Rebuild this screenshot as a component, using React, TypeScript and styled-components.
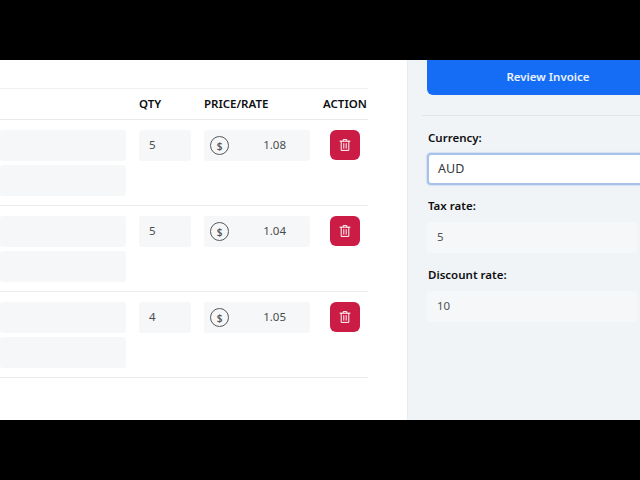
import React from "react";
import styled, { createGlobalStyle } from "styled-components";

const Global = createGlobalStyle`
  html, body { margin: 0; padding: 0; background: #000; }
  body { font-family: "Noto Sans", "Open Sans", "Liberation Sans", sans-serif; }
`;

const Screen = styled.div`
  width: 640px;
  height: 480px;
  overflow: hidden;
  background: #000;
  padding: 60px 0;
  box-sizing: border-box;
`;
const Body = styled.div`
  height: 360px;
  display: flex;
  overflow: hidden;
`;
const Main = styled.main`
  width: 407px;
  flex: none;
  background: #fff;
  padding-top: 28px;
  box-sizing: border-box;
`;
const Table = styled.div`
  width: 368px;
  border-top: 1px solid #eef0f2;
`;
const Columns = styled.div`
  display: grid;
  grid-template-columns: 126px 52px 106px 45px;
  column-gap: 13px;
  box-sizing: border-box;
  width: 368px;
`;
const Head = styled(Columns)`
  height: 31px;
  align-items: center;
  padding-bottom: 1px;
  border-bottom: 1px solid #e8eaed;
`;
const HeadCell = styled.div`
  font-size: 11.5px;
  font-weight: 600;
  color: #0d0f12;
  white-space: nowrap;
`;
const Row = styled(Columns)`
  height: 86px;
  padding-top: 10px;
  border-bottom: 1px solid #e9ebee;
  align-items: start;
`;
const NameStack = styled.div`
  display: flex;
  flex-direction: column;
  gap: 4px;
`;
const Field = styled.div`
  height: 31px;
  background: #f5f7f8;
  border-radius: 3px;
`;
const Qty = styled(Field)`
  display: flex;
  align-items: center;
  padding: 0 0 2px 10px;
  box-sizing: border-box;
  font-size: 11.5px;
  color: #4a4d50;
`;
const Price = styled(Field)`
  display: flex;
  align-items: center;
  justify-content: space-between;
  padding: 0 24px 0 6px;
  font-size: 11.5px;
  color: #4a4d50;
`;
const PriceValue = styled.span`
  margin-bottom: 2px;
`;
const Dollar = styled.span`
  width: 17px;
  height: 17px;
  border: 1.2px solid #56595c;
  border-radius: 50%;
  display: flex;
  align-items: center;
  justify-content: center;
  font-size: 10px;
  font-weight: 600;
  color: #56595c;
`;
const DeleteButton = styled.button`
  width: 30px;
  height: 30px;
  margin-left: 7px;
  padding: 0;
  border: 0;
  border-radius: 6px;
  background: #cb1c45;
  color: #fff;
  display: flex;
  align-items: center;
  justify-content: center;
`;
const Side = styled.aside`
  flex: 1;
  background: #f1f4f6;
  border-left: 1px solid #e9ebee;
  padding-left: 19px;
  min-width: 0;
`;
const Review = styled.button`
  width: 242px;
  height: 35px;
  border: 0;
  border-radius: 0 0 6px 6px;
  background: #166df5;
  color: #eaf2ff;
  font-family: inherit;
  font-size: 11.5px;
  font-weight: 600;
  display: block;
  padding: 0 0 3px 0;
  text-align: center;
`;
const Rule = styled.hr`
  border: 0;
  border-top: 1px solid #e1e4e8;
  margin: 20px 0 0 -5px;
`;
const Label = styled.label<{ $gap: number }>`
  display: block;
  font-size: 11.5px;
  font-weight: 600;
  color: #0d0f12;
  line-height: 16px;
  padding-left: 1px;
  margin-top: ${(p) => p.$gap}px;
`;
const Select = styled.div`
  margin-top: 7px;
  width: 240px;
  height: 32px;
  box-sizing: border-box;
  border: 2px solid #a6c2ea;
  box-shadow: 0 0 1px 1px #d3e0f2;
  border-radius: 4px;
  background: #fff;
  display: flex;
  align-items: center;
  padding: 0 0 2px 9px;
  font-size: 12.5px;
  color: #33383c;
`;
const RateInput = styled.div`
  margin-top: 8px;
  width: 210px;
  height: 31px;
  background: #f5f7f8;
  border-radius: 3px;
  display: flex;
  align-items: center;
  padding: 0 0 2px 10px;
  box-sizing: border-box;
  font-size: 11.5px;
  color: #505356;
`;

const TrashIcon = () => (
  <svg width="14" height="14" viewBox="0 0 14 14" fill="none" stroke="currentColor" strokeWidth="1" strokeLinecap="round" strokeLinejoin="round">
    <path d="M2 3.2h10" />
    <path d="M5.2 3V1.6h3.6V3" />
    <path d="M3.2 3.2v9.2h7.6V3.2" />
    <path d="M5.8 5.6v4.6M8.2 5.6v4.6" />
  </svg>
);

const rows = [
  { qty: 5, price: "1.08" },
  { qty: 5, price: "1.04" },
  { qty: 4, price: "1.05" },
];

export default function App() {
  return (
    <Screen>
      <Global />
      <Body>
        <Main>
          <Table>
            <Head>
              <span />
              <HeadCell>QTY</HeadCell>
              <HeadCell>PRICE/RATE</HeadCell>
              <HeadCell>ACTION</HeadCell>
            </Head>
            {rows.map((r) => (
              <Row key={r.price}>
                <NameStack>
                  <Field />
                  <Field />
                </NameStack>
                <Qty>{r.qty}</Qty>
                <Price>
                  <Dollar>$</Dollar>
                  <PriceValue>{r.price}</PriceValue>
                </Price>
                <DeleteButton aria-label="Delete">
                  <TrashIcon />
                </DeleteButton>
              </Row>
            ))}
          </Table>
        </Main>
        <Side>
          <Review>Review Invoice</Review>
          <Rule />
          <Label $gap={14}>Currency:</Label>
          <Select>AUD</Select>
          <Label $gap={13}>Tax rate:</Label>
          <RateInput>5</RateInput>
          <Label $gap={14}>Discount rate:</Label>
          <RateInput>10</RateInput>
        </Side>
      </Body>
    </Screen>
  );
}
